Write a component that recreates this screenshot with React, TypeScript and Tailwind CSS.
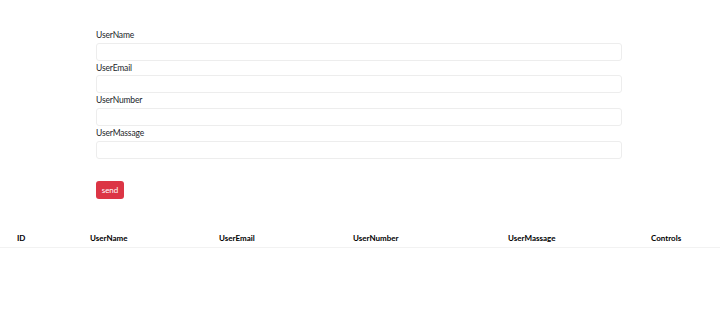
const fields = ['UserName', 'UserEmail', 'UserNumber', 'UserMassage'];

const columns = [
  { label: 'ID', w: 'w-[90px] pl-[17px]' },
  { label: 'UserName', w: 'w-[129px]' },
  { label: 'UserEmail', w: 'w-[134px]' },
  { label: 'UserNumber', w: 'w-[155px]' },
  { label: 'UserMassage', w: 'w-[143px]' },
  { label: 'Controls', w: 'flex-1' },
];

const App = () => {
  return (
    <div className="min-h-[311px] bg-white text-[#212529] font-['Lato','Liberation_Sans',sans-serif]">
      {/* Form */}
      <form className="pl-[96px] pr-[98px] pt-[28px]" onSubmit={(e) => e.preventDefault()}>
        {fields.map((f) => (
          <div key={f}>
            <label className="block h-[14.67px] text-[8.5px] leading-[14.67px] tracking-[-0.15px]">{f}</label>
            <input
              type="text"
              className="block w-full h-[18px] rounded-[3px] border border-[#ededed] bg-white outline-none"
            />
          </div>
        ))}
        <button
          type="submit"
          className="mt-[22px] h-[18px] w-[28px] rounded-[3px] bg-[#dc3545] text-[8px] text-white leading-[18px]"
        >
          send
        </button>
      </form>

      {/* Table */}
      <div className="mt-[30px] flex h-[19px] items-center border-b border-[#f2f2f2] text-[8px] font-bold text-black">
        {columns.map((c) => (
          <div key={c.label} className={c.w}>
            {c.label}
          </div>
        ))}
      </div>
    </div>
  );
};

export default App;
